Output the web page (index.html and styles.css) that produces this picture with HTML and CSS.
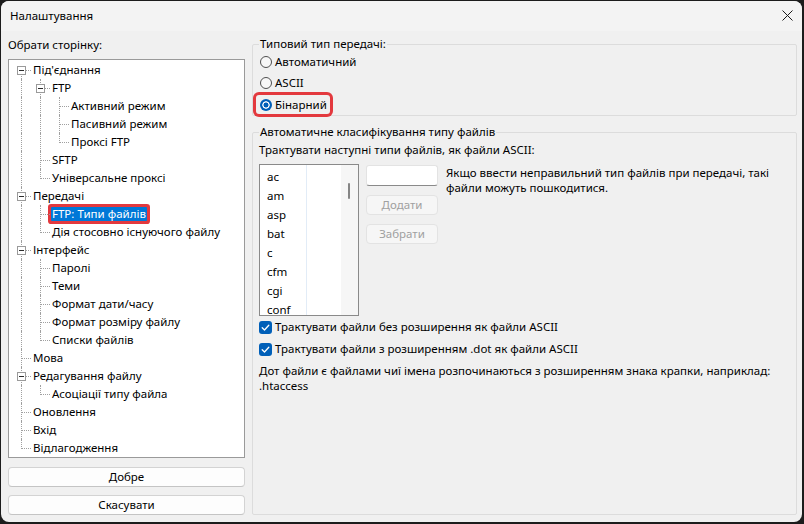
FILE: index.html
```html
<!DOCTYPE html>
<html lang="uk">
<head>
<meta charset="utf-8">
<title>Налаштування</title>
<link rel="stylesheet" href="styles.css">
</head>
<body>
<div class="window">
  <div class="titlebar">
    <span class="title">Налаштування</span>
    <svg class="close" width="11" height="11" viewBox="0 0 11 11"><path d="M0.5 0.5 L10.5 10.5 M10.5 0.5 L0.5 10.5" stroke="#1a1a1a" stroke-width="1" fill="none"/></svg>
  </div>
  <div class="main">
    <div class="left">
      <div class="label">Обрати сторінку:</div>
      <div class="tree">
        <div class="row"><span class="g f"><i class="box"></i></span><span class="txt">Під'єднання</span></div>
        <div class="row"><span class="g v"></span><span class="g t"><i class="box"></i></span><span class="txt">FTP</span></div>
        <div class="row"><span class="g v"></span><span class="g v"></span><span class="g t"></span><span class="txt">Активний режим</span></div>
        <div class="row"><span class="g v"></span><span class="g v"></span><span class="g t"></span><span class="txt">Пасивний режим</span></div>
        <div class="row"><span class="g v"></span><span class="g v"></span><span class="g l"></span><span class="txt">Проксі FTP</span></div>
        <div class="row"><span class="g v"></span><span class="g t"></span><span class="txt">SFTP</span></div>
        <div class="row"><span class="g v"></span><span class="g l"></span><span class="txt">Універсальне проксі</span></div>
        <div class="row"><span class="g t"><i class="box"></i></span><span class="txt">Передачі</span></div>
        <div class="row"><span class="g v"></span><span class="g t"></span><span class="txt sel">FTP: Типи файлів</span></div>
        <div class="row"><span class="g v"></span><span class="g l"></span><span class="txt">Дія стосовно існуючого файлу</span></div>
        <div class="row"><span class="g t"><i class="box"></i></span><span class="txt">Інтерфейс</span></div>
        <div class="row"><span class="g v"></span><span class="g t"></span><span class="txt">Паролі</span></div>
        <div class="row"><span class="g v"></span><span class="g t"></span><span class="txt">Теми</span></div>
        <div class="row"><span class="g v"></span><span class="g t"></span><span class="txt">Формат дати/часу</span></div>
        <div class="row"><span class="g v"></span><span class="g t"></span><span class="txt">Формат розміру файлу</span></div>
        <div class="row"><span class="g v"></span><span class="g l"></span><span class="txt">Списки файлів</span></div>
        <div class="row"><span class="g t"></span><span class="txt">Мова</span></div>
        <div class="row"><span class="g t"><i class="box"></i></span><span class="txt">Редагування файлу</span></div>
        <div class="row"><span class="g v"></span><span class="g l"></span><span class="txt">Асоціації типу файла</span></div>
        <div class="row"><span class="g t"></span><span class="txt">Оновлення</span></div>
        <div class="row"><span class="g t"></span><span class="txt">Вхід</span></div>
        <div class="row"><span class="g l"></span><span class="txt">Відлагодження</span></div>
      </div>
      <button class="btn first">Добре</button>
      <button class="btn">Скасувати</button>
    </div>
    <div class="right">
      <fieldset class="group g1">
        <legend>Типовий тип передачі:</legend>
        <div class="opt"><span class="radio"></span><span class="otext">Автоматичний</span></div>
        <div class="opt"><span class="radio"></span><span class="otext">ASCII</span></div>
        <div class="opt"><span class="mark"><span class="radio on"></span><span class="otext">Бінарний</span></span></div>
      </fieldset>
      <fieldset class="group g2">
        <legend>Автоматичне класифікування типу файлів</legend>
        <div class="caption">Трактувати наступні типи файлів, як файли ASCII:</div>
        <div class="listarea">
          <div class="listbox">
            <div class="items">
              <div class="item">ac</div>
              <div class="item">am</div>
              <div class="item">asp</div>
              <div class="item">bat</div>
              <div class="item">c</div>
              <div class="item">cfm</div>
              <div class="item">cgi</div>
              <div class="item">conf</div>
            </div>
            <div class="scroll"><div class="thumb"></div></div>
          </div>
          <div class="side">
            <div class="input"></div>
            <button class="sbtn">Додати</button>
            <button class="sbtn">Забрати</button>
          </div>
          <div class="hint">Якщо ввести неправильний тип файлів при передачі, такі<br>файли можуть пошкодитися.</div>
        </div>
        <div class="chk"><span class="cbox"><svg width="13" height="13" viewBox="0 0 13 13"><path d="M3.2 6.8 L5.5 9 L9.8 4.3" stroke="#fff" stroke-width="1.3" fill="none" stroke-linecap="round" stroke-linejoin="round"/></svg></span><span class="otext">Трактувати файли без розширення як файли ASCII</span></div>
        <div class="chk"><span class="cbox"><svg width="13" height="13" viewBox="0 0 13 13"><path d="M3.2 6.8 L5.5 9 L9.8 4.3" stroke="#fff" stroke-width="1.3" fill="none" stroke-linecap="round" stroke-linejoin="round"/></svg></span><span class="otext">Трактувати файли з розширенням .dot як файли ASCII</span></div>
        <div class="para">Дот файли є файлами чиї імена розпочинаються з розширенням знака крапки, наприклад:<br>.htaccess</div>
      </fieldset>
    </div>
  </div>
</div>
</body>
</html>
```

FILE: styles.css
```css
* { box-sizing: border-box; }
html, body { margin: 0; padding: 0; height: 100%; }
body {
  background: #1c1c1c;
  font-family: "Noto Sans", "Open Sans", sans-serif;
  font-size: 11.5px;
  color: #000;
}
.window {
  margin: 1px 0 0 1px;
  width: 801px;
  height: 521px;
  background: #f0f0f0;
  border-radius: 8px;
  overflow: hidden;
  display: flex;
  flex-direction: column;
}
.titlebar {
  height: 30px;
  flex: none;
  background: #f3f3f3;
  display: flex;
  align-items: center;
  justify-content: space-between;
  padding: 0 9px 0 9px;
}
.title { line-height: 16px; }
.close { margin-top: -2px; }
.main {
  flex: 1;
  display: flex;
  gap: 7px;
  padding: 5px 5px 7px 7px;
  min-height: 0;
}
.left {
  width: 237px;
  flex: none;
  display: flex;
  flex-direction: column;
}
.label { line-height: 16px; margin-top: 1px; }
.tree {
  margin-top: 6px;
  height: 399px;
  flex: none;
  border: 1px solid #9a9a9a;
  background: #fff;
  padding: 1px 0 0 3px;
  overflow: hidden;
}
.row {
  display: flex;
  height: 18px;
  line-height: 18px;
  white-space: nowrap;
}
.g {
  position: relative;
  width: 19px;
  height: 18px;
  flex: none;
}
.g::before, .g::after {
  content: "";
  position: absolute;
}
.g.v::before, .g.t::before {
  left: 9px; top: 0; bottom: 0;
  border-left: 1px dotted #a0a0a0;
}
.g.l::before {
  left: 9px; top: 0; height: 10px;
  border-left: 1px dotted #a0a0a0;
}
.g.f::before {
  left: 9px; top: 9px; bottom: 0;
  border-left: 1px dotted #a0a0a0;
}
.g.t::after, .g.l::after, .g.f::after {
  left: 10px; top: 9px; width: 9px;
  border-top: 1px dotted #a0a0a0;
}
.box {
  position: absolute;
  left: 5px; top: 5px;
  width: 9px; height: 9px;
  border: 1px solid #9a9a9a;
  background: #fff;
  z-index: 1;
}
.box::after {
  content: "";
  position: absolute;
  left: 1px; top: 3px;
  width: 5px; height: 1px;
  background: #2b2b2b;
}
.txt { margin-left: 2px; }
.txt.sel {
  margin-left: 1px;
  padding: 0 1px;
  align-self: center;
  height: 14px;
  line-height: 14px;
  background: #0078d7;
  color: #fff;
  border-radius: 1px;
  box-shadow: 0 0 0 3px #e3393e;
}
.btn {
  font: inherit;
  color: #000;
  height: 20px;
  margin-top: 8px;
  padding: 0;
  background: #fdfdfd;
  border: 1px solid #d3d3d3;
  border-bottom-color: #c4c4c4;
  border-radius: 4px;
  line-height: 16px;
}
.btn.first { margin-top: 9px; }

.right {
  flex: 1;
  display: flex;
  flex-direction: column;
  min-width: 0;
}
.group {
  margin: 0;
  min-width: 0;
  border: 1px solid #dcdcdc;
  border-radius: 2px;
  padding: 0 6px 1px 6px;
}
.group legend {
  padding: 0 1px;
  line-height: 16px;
}
.g1 { padding-top: 0; }
.g2 { margin-top: 8px; flex: 1; }
.opt {
  display: flex;
  align-items: center;
  height: 21px;
}
.g1 .opt:first-of-type { margin-top: -1px; }
.mark {
  display: flex;
  align-items: center;
  height: 19px;
  padding: 0 3px 0 3px;
  margin-left: -3px;
  margin-top: 2px;
  border-radius: 3px;
  box-shadow: 0 0 0 3px #e3393e;
}
.radio {
  width: 12px; height: 12px;
  margin-left: 1px;
  border-radius: 50%;
  border: 1px solid #4f4f4f;
  background: #f7f7f7;
  flex: none;
}
.radio.on {
  border: none;
  background: radial-gradient(circle, #005fb8 0 2.2px, #fff 2.8px 3.4px, #005fb8 4px);
}
.otext { margin-left: 3px; line-height: 16px; }
.caption { margin-top: 2px; line-height: 16px; }
.listarea {
  display: flex;
  align-items: flex-start;
  margin-top: 6px;
}
.listbox {
  width: 100px;
  height: 152px;
  flex: none;
  border: 1px solid #8a8a8a;
  background: #fff;
  display: flex;
  overflow: hidden;
}
.items {
  width: 81px;
  padding: 2px 0 0 7px;
  background: linear-gradient(to right, transparent 46px, #e2ecf7 46px, #e2ecf7 47px, transparent 47px);
}
.item { line-height: 19px; height: 19px; }
.scroll {
  flex: 1;
  background: #f6f6f6;
}
.thumb {
  width: 2px;
  height: 16px;
  margin: 18px 0 0 7px;
  background: #858585;
  border-radius: 1px;
}
.side {
  width: 72px;
  flex: none;
  margin-left: 7px;
  margin-top: 1px;
  display: flex;
  flex-direction: column;
}
.input {
  height: 21px;
  background: #fff;
  border: 1px solid #e3e3e3;
  border-bottom-color: #8a8a8a;
  border-radius: 3px;
}
.sbtn {
  font: inherit;
  height: 20px;
  margin-top: 9px;
  padding: 0;
  background: #f6f6f6;
  border: 1px solid #e3e3e3;
  border-radius: 4px;
  color: #a0a0a0;
  line-height: 16px;
}
.hint {
  margin-left: 8px;
  line-height: 15px;
  margin-top: 1px;
}
.chk {
  display: flex;
  align-items: center;
  height: 22px;
}
.chk:first-of-type { margin-top: 1px; }
.cbox {
  width: 13px; height: 13px;
  flex: none;
  background: #005fb8;
  border-radius: 3px;
  display: flex;
}
.para { margin-top: 3px; line-height: 15px; }
```
